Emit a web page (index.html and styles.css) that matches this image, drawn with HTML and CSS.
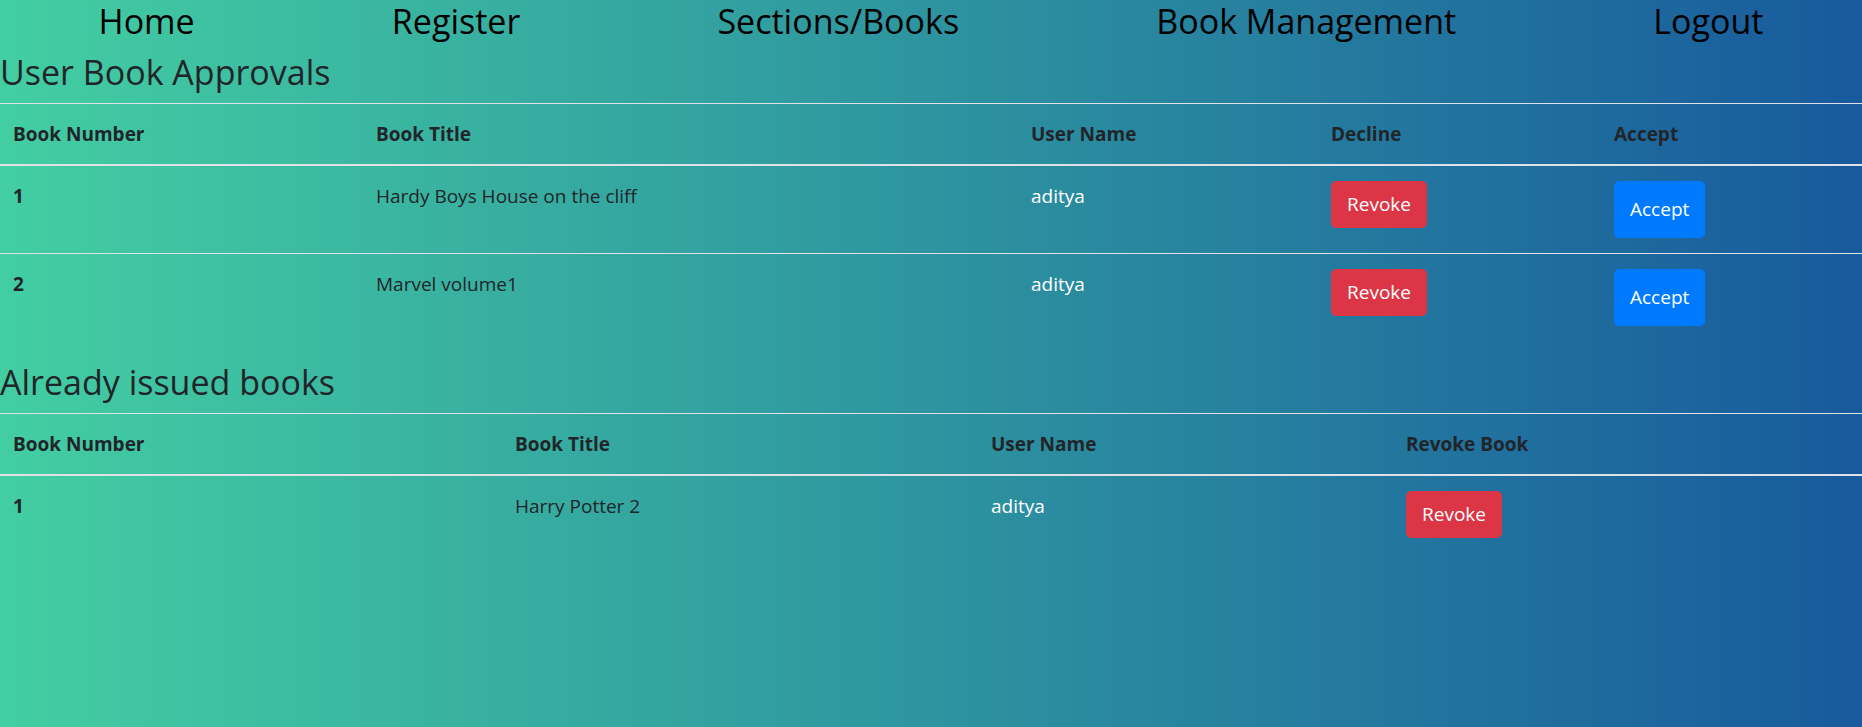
FILE: index.html
```html
<!DOCTYPE html>
<html lang="en">
<head>
<meta charset="utf-8">
<title>Book Management</title>
<link rel="stylesheet" href="styles.css">
</head>
<body>
<nav class="topnav">
  <a class="navlink" href="#">Home</a>
  <a class="navlink" href="#">Register</a>
  <a class="navlink" href="#">Sections/Books</a>
  <a class="navlink" href="#">Book Management</a>
  <a class="navlink" href="#">Logout</a>
</nav>

<h3 class="section-title">User Book Approvals</h3>
<table class="table approvals">
  <colgroup>
    <col class="a-c1"><col class="a-c2"><col class="a-c3"><col class="a-c4"><col class="a-c5">
  </colgroup>
  <thead>
    <tr>
      <th>Book Number</th>
      <th>Book Title</th>
      <th>User Name</th>
      <th>Decline</th>
      <th>Accept</th>
    </tr>
  </thead>
  <tbody>
    <tr>
      <th>1</th>
      <td>Hardy Boys House on the cliff</td>
      <td class="user">aditya</td>
      <td><button class="btn btn-danger">Revoke</button></td>
      <td><button class="btn btn-primary">Accept</button></td>
    </tr>
    <tr>
      <th>2</th>
      <td>Marvel volume1</td>
      <td class="user">aditya</td>
      <td><button class="btn btn-danger">Revoke</button></td>
      <td><button class="btn btn-primary">Accept</button></td>
    </tr>
  </tbody>
</table>

<h3 class="section-title">Already issued books</h3>
<table class="table issued">
  <colgroup>
    <col class="i-c1"><col class="i-c2"><col class="i-c3"><col class="i-c4">
  </colgroup>
  <thead>
    <tr>
      <th>Book Number</th>
      <th>Book Title</th>
      <th>User Name</th>
      <th>Revoke Book</th>
    </tr>
  </thead>
  <tbody>
    <tr>
      <th>1</th>
      <td>Harry Potter 2</td>
      <td class="user">aditya</td>
      <td><button class="btn btn-danger">Revoke</button></td>
    </tr>
  </tbody>
</table>
</body>
</html>
```
FILE: styles.css
```css
html {
  min-height: 100%;
  background: linear-gradient(to right, #43cea2, #185a9d);
}
body {
  margin: 0;
  min-height: 100%;
  font-family: "Open Sans", "Noto Sans", sans-serif;
  font-size: 19px;
  line-height: 30px;
  color: #212529;
}
.topnav {
  display: flex;
  justify-content: space-around;
  font-size: 34px;
  line-height: 42px;
  height: 42px;
  margin-bottom: 8.5px;
}
.navlink {
  color: #000;
  text-decoration: none;
}
.section-title {
  margin: 0 0 10px 0;
  font-size: 34px;
  line-height: 42px;
  font-weight: 400;
  color: #212529;
}
.table {
  width: 100%;
  border-collapse: collapse;
  table-layout: fixed;
  margin-bottom: 20px;
}
.table th,
.table td {
  padding: 15px 13px;
  text-align: left;
  vertical-align: top;
  border-top: 1px solid #dee2e6;
}
.table thead th {
  vertical-align: bottom;
  border-bottom: 2px solid #dee2e6;
}
.table th { font-weight: 700; }
.table td.user { color: #fff; }

.a-c1 { width: 363px; }
.a-c2 { width: 655px; }
.a-c3 { width: 300px; }
.a-c4 { width: 283px; }
.a-c5 { width: auto; }

.i-c1 { width: 502px; }
.i-c2 { width: 476px; }
.i-c3 { width: 415px; }
.i-c4 { width: auto; }

.btn {
  font-family: inherit;
  font-size: 19px;
  line-height: 30px;
  padding: 7.5px 15px;
  border: 1px solid transparent;
  border-radius: 5px;
  color: #fff;
  cursor: pointer;
  display: inline-block;
}
.btn-danger {
  background: #dc3545;
  border-color: #dc3545;
}
.btn-primary {
  background: #007bff;
  border-color: #007bff;
  padding-top: 12.5px;
  padding-bottom: 12.5px;
}
```
